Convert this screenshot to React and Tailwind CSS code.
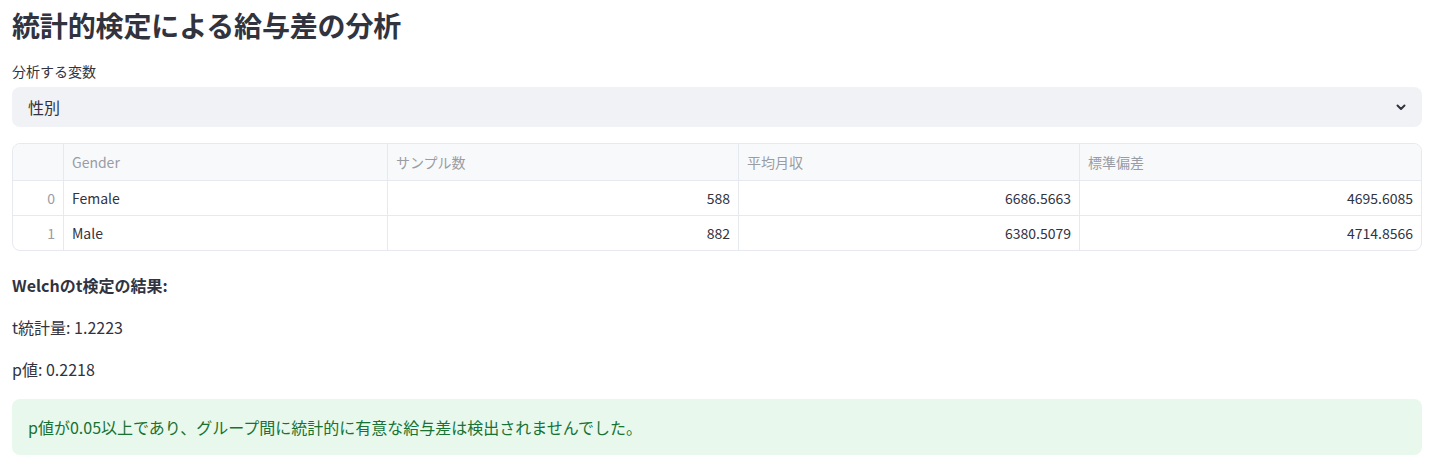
import React from 'react';

const rows = [
    { idx: 0, gender: 'Female', n: 588, mean: '6686.5663', sd: '4695.6085' },
    { idx: 1, gender: 'Male', n: 882, mean: '6380.5079', sd: '4714.8566' },
];

const cols = 'grid grid-cols-[51px_324px_351px_341px_1fr]';

const Chevron = () => (
    <svg width="12" height="12" viewBox="0 0 24 24" fill="none" stroke="#31333f" strokeWidth="4" strokeLinecap="round" strokeLinejoin="round">
        <path d="M5 9l7 7 7-7" />
    </svg>
);

export default function App() {
    return (
        <div className="bg-white pl-3 pr-[14px] text-[#31333f] font-['Noto_Sans_CJK_JP','Noto_Sans',sans-serif]">
            <h1 className="pt-[7px] text-[28px] leading-[36px] font-bold tracking-[-0.005em]">統計的検定による給与差の分析</h1>

            <div className="mt-[19px] text-[14px] leading-[18px]">分析する変数</div>
            <div className="mt-[7px] h-[40px] rounded-lg bg-[#f0f2f6] flex items-center justify-between pl-4 pr-[15px]">
                <span className="text-[16px]">性別</span>
                <Chevron />
            </div>

            <div className="mt-[16px] border border-[#e6e9ef] rounded-lg overflow-hidden text-[14px]">
                <div className={`${cols} h-[36px] bg-[#f8f9fb] text-[#9a9ca4]`}>
                    <div className="border-r border-[#e6e9ef]" />
                    <div className="border-r border-[#e6e9ef] px-2 flex items-center">Gender</div>
                    <div className="border-r border-[#e6e9ef] px-2 flex items-center">サンプル数</div>
                    <div className="border-r border-[#e6e9ef] px-2 flex items-center">平均月収</div>
                    <div className="px-2 flex items-center">標準偏差</div>
                </div>
                {rows.map((r) => (
                    <div key={r.idx} className={`${cols} h-[35px] border-t border-[#e6e9ef]`}>
                        <div className="border-r border-[#e6e9ef] px-2 flex items-center justify-end text-[#9a9ca4]">{r.idx}</div>
                        <div className="border-r border-[#e6e9ef] px-2 flex items-center">{r.gender}</div>
                        <div className="border-r border-[#e6e9ef] px-2 flex items-center justify-end">{r.n}</div>
                        <div className="border-r border-[#e6e9ef] px-2 flex items-center justify-end">{r.mean}</div>
                        <div className="px-2 flex items-center justify-end">{r.sd}</div>
                    </div>
                ))}
            </div>

            <div className="text-[16px] leading-[24px]">
                <p className="mt-[22px] font-bold">Welchのt検定の結果:</p>
                <p className="mt-[18px]">t統計量: 1.2223</p>
                <p className="mt-[18px]">p値: 0.2218</p>
            </div>

            <div className="mt-[18px] rounded-lg bg-[#e8f8ed] text-[#177233] text-[16px] h-[56px] flex items-center px-4">
                p値が0.05以上であり、グループ間に統計的に有意な給与差は検出されませんでした。
            </div>
        </div>
    );
}
